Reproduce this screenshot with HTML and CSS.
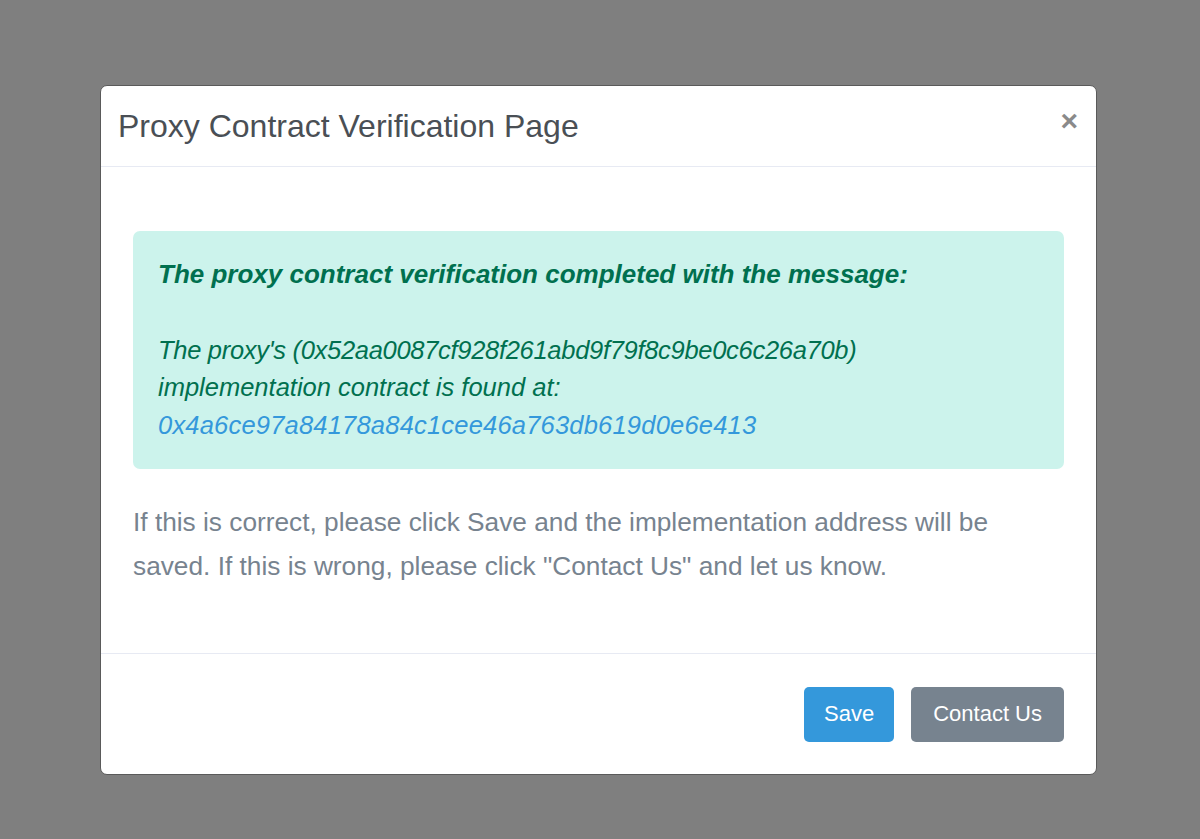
FILE: index.html
```html
<!DOCTYPE html>
<html>
<head>
<meta charset="utf-8">
<link rel="stylesheet" href="styles.css">
</head>
<body>
<div class="modal">
  <div class="modal-header">
    <h5 class="modal-title">Proxy Contract Verification Page</h5>
    <button class="close" type="button">&times;</button>
  </div>
  <div class="modal-body">
    <div class="alert">
      <b>The proxy contract verification completed with the message:</b><br><br>
      <span class="addr-line">The proxy's (0x52aa0087cf928f261abd9f79f8c9be0c6c26a70b)</span><br>
      implementation contract is found at:<br>
      <a href="#" class="link">0x4a6ce97a84178a84c1cee46a763db619d0e6e413</a>
    </div>
    <p class="note">If this is correct, please click Save and the implementation address will be saved. If this is wrong, please click "Contact Us" and let us know.</p>
  </div>
  <div class="modal-footer">
    <button class="btn btn-primary" type="button">Save</button>
    <button class="btn btn-secondary" type="button">Contact Us</button>
  </div>
</div>
</body>
</html>
```
FILE: styles.css
```css
html, body {
  margin: 0;
  padding: 0;
  background: #7f7f7f;
  font-family: "Liberation Sans", Arial, sans-serif;
}
body {
  padding-top: 85px;
  height: 839px;
  box-sizing: border-box;
  overflow: hidden;
}
.modal {
  width: 997px;
  margin-left: 100px;
  background: #fff;
  border: 1px solid #5a5a5a;
  border-radius: 7px;
  box-sizing: border-box;
}
.modal-header {
  height: 81px;
  box-sizing: border-box;
  border-bottom: 1px solid #e7eaf3;
  display: flex;
  align-items: center;
  justify-content: space-between;
  padding: 0 18px 0 17px;
}
.modal-title {
  margin: 0;
  font-size: 32px;
  font-weight: normal;
  color: #4a4f55;
  line-height: 1.2;
}
.close {
  border: 0;
  background: transparent;
  padding: 0;
  margin-top: -10px;
  font-family: "Liberation Sans", Arial, sans-serif;
  font-size: 30px;
  font-weight: bold;
  color: #8a8a8a;
  line-height: 1;
}
.modal-body {
  padding: 64px 32px 65px 32px;
}
.alert {
  background: #ccf3ec;
  border-radius: 7px;
  padding: 25px 25px 24px 25px;
  font-size: 25.5px;
  line-height: 37.75px;
  font-style: italic;
  color: #00704f;
}
.alert b {
  font-weight: bold;
  font-size: 26px;
}
.addr-line {
  letter-spacing: -0.3px;
}
.link {
  color: #3498db;
  text-decoration: none;
  letter-spacing: 0.2px;
}
.note {
  margin: 31px 0 0 0;
  padding-right: 20px;
  font-size: 26.25px;
  line-height: 44px;
  color: #77838f;
}
.modal-footer {
  border-top: 1px solid #e7eaf3;
  display: flex;
  justify-content: flex-end;
  gap: 17px;
  padding: 33px 32px 32px 32px;
}
.btn {
  height: 55px;
  border: 0;
  border-radius: 5px;
  padding: 0 20px;
  font-family: "Liberation Sans", Arial, sans-serif;
  font-size: 22px;
  color: #fff;
}
.btn-primary {
  background: #3498db;
}
.btn-secondary {
  background: #77838f;
  padding: 0 22px;
}
```
